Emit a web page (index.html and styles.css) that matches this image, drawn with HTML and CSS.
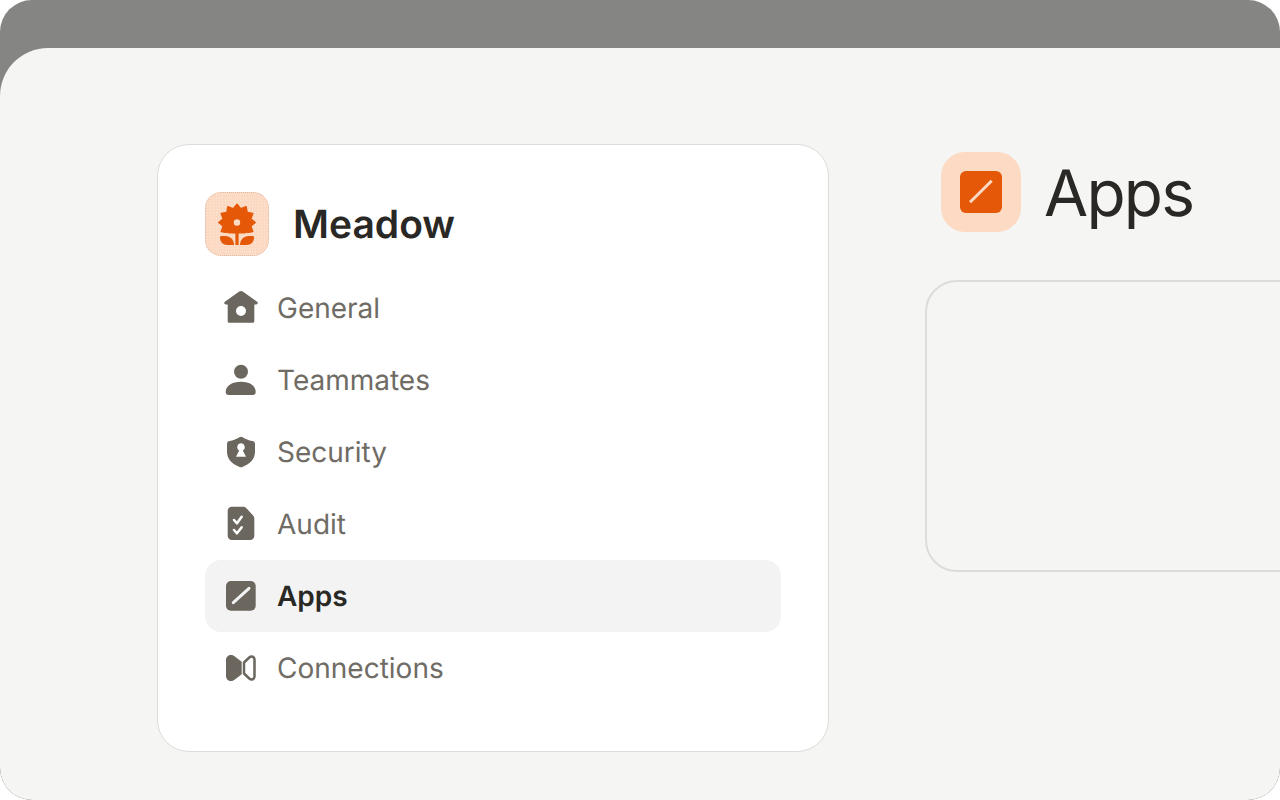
FILE: index.html
```html
<!DOCTYPE html>
<html lang="en">
<head>
    <meta charset="UTF-8">
    <title>Meadow - Apps</title>
    <link rel="stylesheet" href="styles.css">
</head>
<body>
    <div class="frame">
        <div class="panel">
            <!-- Sidebar card -->
            <div class="card">
                <div class="brand">
                    <div class="logo">
                        <svg viewBox="1 1 62 62" width="62" height="62">
                            <defs>
                                <clipPath id="head-clip"><rect x="0" y="0" width="64" height="41.500"/></clipPath>
                            </defs>
                            <g fill="#e55807" stroke="#e55807" stroke-width="1.500" stroke-linejoin="round" clip-path="url(#head-clip)">
                                <path id="petal" d="M28.500 16.500L32 12.300L35.500 16.500z"/>
                                <use href="#petal" transform="rotate(30 32 30.500)"/>
                                <use href="#petal" transform="rotate(60 32 30.500)"/>
                                <use href="#petal" transform="rotate(90 32 30.500)"/>
                                <use href="#petal" transform="rotate(120 32 30.500)"/>
                                <use href="#petal" transform="rotate(240 32 30.500)"/>
                                <use href="#petal" transform="rotate(270 32 30.500)"/>
                                <use href="#petal" transform="rotate(300 32 30.500)"/>
                                <use href="#petal" transform="rotate(330 32 30.500)"/>
                            </g>
                            <path fill="#e55807" fill-rule="evenodd" clip-path="url(#head-clip)" d="M32 16.500a14 14 0 1 0 0 28a14 14 0 0 0 0-28zM32 27.300a3.200 3.200 0 1 1 0 6.400a3.200 3.200 0 0 1 0-6.400z"/>
                            <rect x="30.400" y="41" width="3.200" height="12" fill="#e55807"/>
                            <path fill="#e55807" d="M15 45.500c0-1 .6-1.500 1.500-1.500h4c4.500 0 8.500 3.500 8.500 9h-6.500c-4.500 0-7.500-3-7.500-7.500z"/>
                            <path fill="#e55807" d="M49 45.500c0-1-.6-1.500-1.500-1.500h-4c-4.500 0-8.500 3.500-8.500 9h6.500c4.500 0 7.500-3 7.500-7.500z"/>
                        </svg>
                    </div>
                    <div class="brand-name">Meadow</div>
                </div>
                <div class="nav">
                    <div class="nav-item">
                        <svg class="nav-icon" viewBox="0 0 40 40">
                            <path fill-rule="evenodd" d="M20 3c.7 0 1.300.2 1.800.6l14.300 10.200c1.200.9.600 2.700-.9 2.700h-1.900v16.700c0 .8-.7 1.500-1.500 1.500h-23.600c-.8 0-1.500-.7-1.500-1.500v-16.700h-1.900c-1.500 0-2.100-1.800-.9-2.700l14.300-10.200c.5-.4 1.100-.6 1.800-.6zM20 18a5 5 0 1 0 0 10a5 5 0 0 0 0-10z"/>
                        </svg>
                        <span>General</span>
                    </div>
                    <div class="nav-item">
                        <svg class="nav-icon" viewBox="0 0 40 40">
                            <circle cx="20" cy="11.700" r="7"/>
                            <path d="M4.700 32c0-6.500 6.500-10.300 15.300-10.300s14.700 3.800 14.700 10.300c0 2-1 3-3 3h-24c-2 0-3-1-3-3z"/>
                        </svg>
                        <span>Teammates</span>
                    </div>
                    <div class="nav-item">
                        <svg class="nav-icon" viewBox="0 0 40 40">
                            <path fill-rule="evenodd" d="M20 4.700c.6 0 1.100.2 1.600.5 2.800 2 6 3.100 9.900 3.700 1.500.2 2.500 1.300 2.500 2.800v8.300c0 7-5.500 12.500-12.600 14.900-.9.300-1.900.3-2.800 0-7.100-2.400-12.600-7.900-12.600-14.900v-8.300c0-1.500 1-2.600 2.500-2.800 3.900-.6 7.100-1.700 9.900-3.700.5-.3 1-.5 1.600-.5zM20 11.300a3.800 3.800 0 0 0-1.800 7.100l-3.200 6.300h10l-3.200-6.300a3.800 3.800 0 0 0-1.800-7.100z"/>
                        </svg>
                        <span>Security</span>
                    </div>
                    <div class="nav-item">
                        <svg class="nav-icon" viewBox="0 0 40 40">
                            <path d="M10.700 2.700h11.600c1 0 2 .4 2.800 1.200l7 7.700c.8.800 1.200 1.700 1.200 2.800v17.600c0 2.200-1.800 4-4 4h-18.600c-2.200 0-4-1.800-4-4v-25.300c0-2.200 1.800-4 4-4z"/>
                            <path class="check" d="M13 16l3 3.300 4.700-6.600M13 26l3 3.300 4.700-6"/>
                        </svg>
                        <span>Audit</span>
                    </div>
                    <div class="nav-item active">
                        <svg class="nav-icon" viewBox="0 0 40 40">
                            <rect x="5" y="5" width="29.700" height="29.700" rx="5"/>
                            <path class="slash" d="M12.300 26.700l15.700-14.400"/>
                        </svg>
                        <span>Apps</span>
                    </div>
                    <div class="nav-item">
                        <svg class="nav-icon" viewBox="0 0 40 40">
                            <path d="M5 12c0-3 2.300-5 5-5 1.300 0 2.500.5 3.500 1.300l7.200 5.400v12.600l-7.200 5.400c-1 .8-2.200 1.300-3.500 1.300-2.700 0-5-2-5-5z"/>
                            <path class="outline" d="M23 14.500l5.300-5c2.200-2 5.200-.8 5.200 2.200v16.600c0 3-3 4.200-5.200 2.200l-5.300-5z"/>
                        </svg>
                        <span>Connections</span>
                    </div>
                </div>
            </div>

            <!-- Page content -->
            <div class="content">
                <div class="title-row">
                    <div class="title-icon">
                        <svg viewBox="0 0 42 42" width="42" height="42">
                            <rect width="42" height="42" rx="6" fill="#e55807"/>
                            <path d="M10 31.300L31.700 9.700" stroke="#fcd9c2" stroke-width="3"/>
                        </svg>
                    </div>
                    <h1 class="title">Apps</h1>
                </div>
                <div class="empty-box"></div>
            </div>
        </div>
    </div>
</body>
</html>
```

FILE: styles.css
```css
body {
    margin: 0;
    background-color: #ffffff;
    font-family: Inter, "Liberation Sans", sans-serif;
    text-rendering: geometricPrecision;
}
.frame {
    width: 1280px;
    height: 800px;
    padding-top: 48px;
    box-sizing: border-box;
    background-color: #858583;
    border-radius: 32px;
    overflow: hidden;
}
.panel {
    display: flex;
    gap: 96px;
    height: 752px;
    padding: 96px 0 0 157px;
    box-sizing: border-box;
    background-color: #f5f5f3;
    border-radius: 48px 0 32px 32px;
    overflow: hidden;
}
.card {
    flex: none;
    width: 672px;
    height: 608px;
    padding: 47px;
    box-sizing: border-box;
    background-color: #ffffff;
    border: 1px solid #dcdcd8;
    border-radius: 32px;
}
.brand {
    display: flex;
    align-items: center;
    gap: 24px;
    margin-bottom: 16px;
}
.logo {
    width: 64px;
    height: 64px;
    box-sizing: border-box;
    background-color: #fcd9c2;
    background-image: radial-gradient(circle, #fde6d6 1px, transparent 1px);
    background-size: 3px 3px;
    border: 1px dotted #dcbba6;
    border-radius: 16px;
}
.logo svg {
    display: block;
}
.brand-name {
    font-size: 39px;
    font-weight: 600;
    color: #292825;
}
.nav-item {
    display: flex;
    align-items: center;
    gap: 16px;
    height: 72px;
    padding-left: 16px;
    border-radius: 16px;
    font-size: 28px;
    color: #6f6c65;
}
.nav-item.active {
    background-color: #f3f3f3;
    font-weight: 600;
    color: #292825;
}
.nav-icon {
    width: 40px;
    height: 40px;
    fill: #6b675f;
}
.check {
    fill: none;
    stroke: #ffffff;
    stroke-width: 2.500;
    stroke-linecap: round;
    stroke-linejoin: round;
}
.slash {
    fill: none;
    stroke: #f3f3f3;
    stroke-width: 3;
    stroke-linecap: round;
}
.outline {
    fill: none;
    stroke: #6b675f;
    stroke-width: 2.500;
    stroke-linejoin: round;
}
.content {
    flex: none;
    width: 600px;
    padding-top: 8px;
}
.title-row {
    display: flex;
    align-items: center;
    gap: 23px;
    padding-left: 16px;
    margin-bottom: 48px;
}
.title-icon {
    display: flex;
    align-items: center;
    justify-content: center;
    width: 80px;
    height: 80px;
    background-color: #fcdac3;
    border-radius: 24px;
}
.title {
    margin: 0;
    padding-top: 2px;
    font-size: 64px;
    font-weight: 400;
    letter-spacing: -1.750px;
    color: #292825;
}
.empty-box {
    height: 292px;
    box-sizing: border-box;
    border: 2px solid #dcdcd8;
    border-radius: 32px;
}
```
